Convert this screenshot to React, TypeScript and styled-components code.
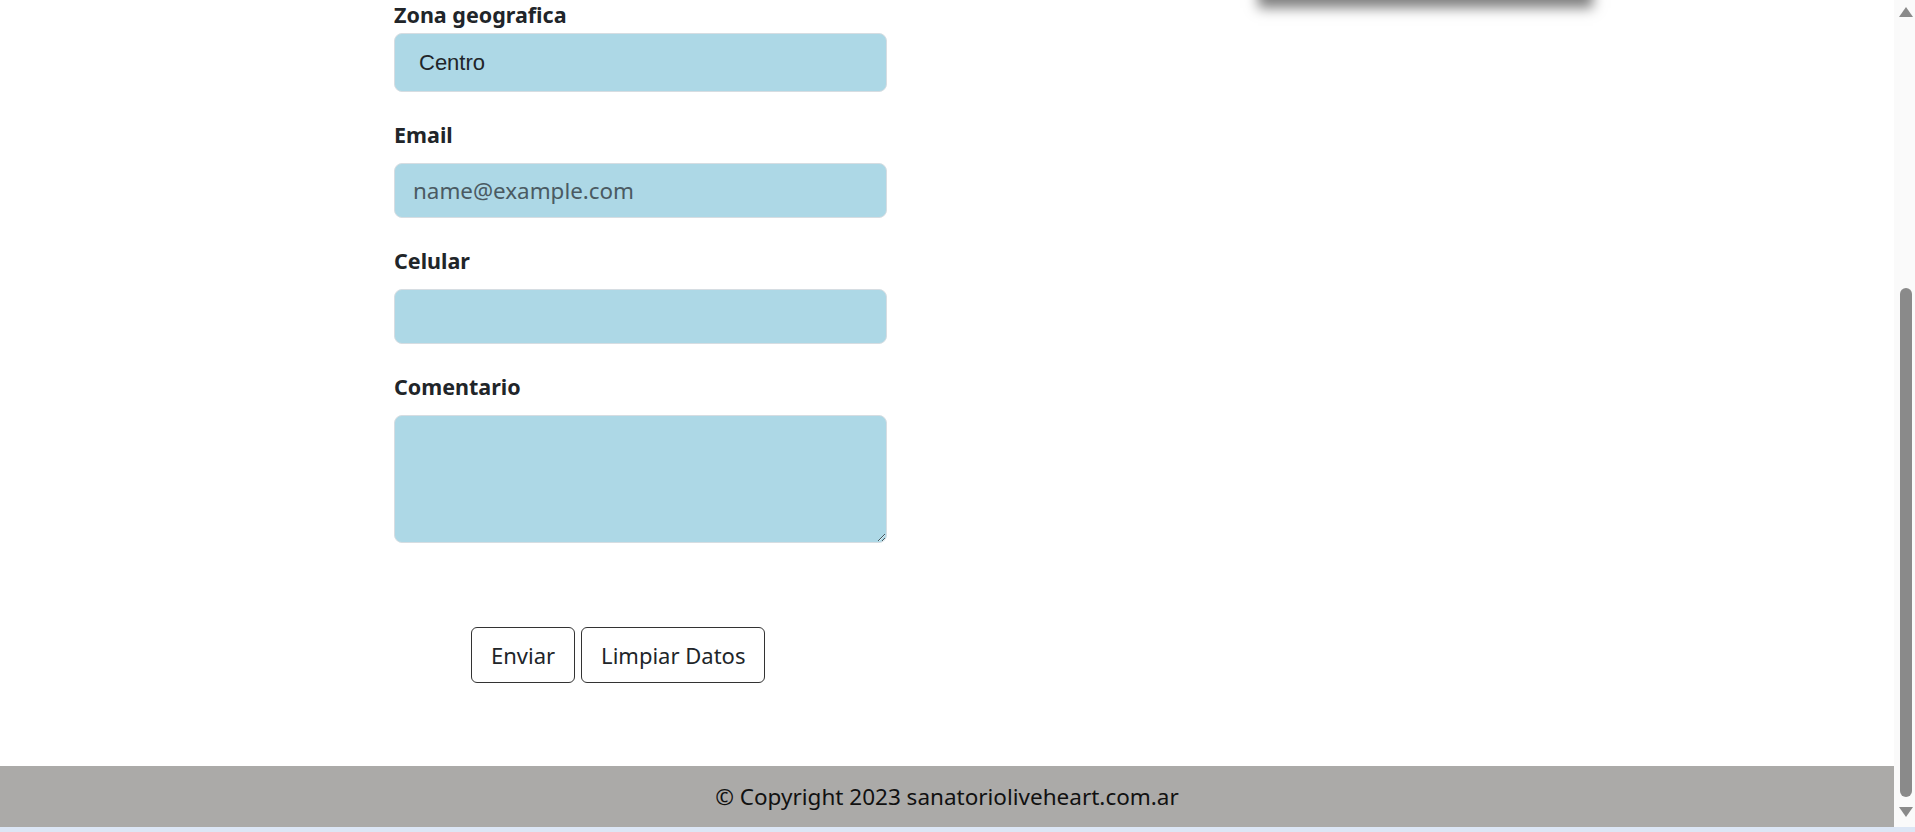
import React, { FC } from 'react'
import styled, { createGlobalStyle } from 'styled-components'

const GlobalStyle = createGlobalStyle`
  html, body {
    margin: 0;
    padding: 0;
    overflow: hidden;
    background-color: white;
  }

  * {
    box-sizing: border-box;
  }
`

const Screen = styled.div`
  display: flex;
  flex-direction: column;
  height: 832px;
  overflow: hidden;

  font-family: 'Noto Sans', 'Open Sans', sans-serif;
  color: #212529;
`

const Viewport = styled.div`
  display: flex;
  flex: 1;
  min-height: 0;
`

const Page = styled.div`
  display: flex;
  flex-direction: column;
  flex: 1;
  min-width: 0;
`

const Main = styled.main`
  display: grid;
  grid-template-columns: 493px 1fr;
  align-items: start;
  flex: 1;

  padding-left: 394px;
`

const Form = styled.form`
  display: flex;
  flex-direction: column;
`

const Label = styled.label<{ $gapTop: number; $gapBottom: number }>`
  display: block;
  margin-top: ${(p) => p.$gapTop}px;
  margin-bottom: ${(p) => p.$gapBottom}px;

  font-size: 21.5px;
  font-weight: 700;
  line-height: 30px;
`

const fieldBase = `
  display: block;
  width: 100%;

  border: 1px solid #d6dde2;
  border-radius: 8px;
  outline: none;

  background-color: #add8e6;
  color: #212529;
`

const Select = styled.select`
  ${fieldBase}
  height: 59px;
  padding: 0 24px;

  appearance: none;
  font-family: 'Liberation Sans', Arial, sans-serif;
  font-size: 22px;
`

const Input = styled.input`
  ${fieldBase}
  height: 55px;
  padding: 0 18px;

  font-family: 'Noto Sans', 'Open Sans', sans-serif;
  font-size: 22.4px;

  &::placeholder {
    color: #4a5a62;
  }
`

const TextArea = styled.textarea`
  ${fieldBase}
  height: 128px;
  padding: 10px 18px;

  font-family: 'Noto Sans', 'Open Sans', sans-serif;
  font-size: 22px;
`

const Buttons = styled.div`
  display: flex;
  gap: 6px;

  margin-top: 84px;
  padding-left: 77px;
`

const Button = styled.button`
  height: 56px;
  padding: 0 19px;

  border: 1px solid #333;
  border-radius: 6px;

  background-color: white;
  color: #212529;
  font-family: 'Noto Sans', 'Open Sans', sans-serif;
  font-size: 22px;
  cursor: pointer;
`

const Aside = styled.aside`
  display: flex;
`

const Card = styled.div`
  width: 335px;
  height: 120px;
  margin-top: -122px;
  margin-left: 371px;

  background-color: white;
  box-shadow: 0 10px 12px rgba(0, 0, 0, 0.5);
`

const Footer = styled.footer`
  display: flex;
  align-items: center;
  justify-content: center;
  height: 61px;

  background-color: #abaaa8;
  color: #111;
  font-size: 22.5px;
`

const Scrollbar = styled.div`
  display: flex;
  flex-direction: column;
  align-items: center;
  width: 21px;
  padding: 7px 0 10px 2px;

  background-color: #fafafa;
`

const Thumb = styled.div`
  width: 12px;
  flex: 1;
  margin: 271px 0 10px;

  border-radius: 6px;
  background-color: #8a8a8a;
`

const Strip = styled.div`
  height: 5px;
  background-color: #dce6f5;
`

const Arrow: FC<{ down?: boolean }> = ({ down }) => (
  <svg width="14" height="10" viewBox="0 0 14 10">
    <path d={down ? 'M0 0 H14 L7 10 Z' : 'M7 0 L14 10 H0 Z'} fill="#8a8a8a" />
  </svg>
)

export default function App() {
  return (
    <>
      <GlobalStyle />
      <Screen>
        <Viewport>
          <Page>
            <Main>
              <Form onSubmit={(e) => e.preventDefault()}>
                <Label htmlFor="zona" $gapTop={0} $gapBottom={3}>
                  Zona geografica
                </Label>
                <Select id="zona" defaultValue="Centro">
                  <option>Centro</option>
                  <option>Norte</option>
                  <option>Sur</option>
                </Select>

                <Label htmlFor="email" $gapTop={28} $gapBottom={13}>
                  Email
                </Label>
                <Input id="email" type="email" placeholder="name@example.com" />

                <Label htmlFor="celular" $gapTop={28} $gapBottom={13}>
                  Celular
                </Label>
                <Input id="celular" type="tel" />

                <Label htmlFor="comentario" $gapTop={28} $gapBottom={13}>
                  Comentario
                </Label>
                <TextArea id="comentario" />

                <Buttons>
                  <Button type="submit">Enviar</Button>
                  <Button type="reset">Limpiar Datos</Button>
                </Buttons>
              </Form>
              <Aside>
                <Card />
              </Aside>
            </Main>
            <Footer>© Copyright 2023 sanatorioliveheart.com.ar</Footer>
          </Page>
          <Scrollbar>
            <Arrow />
            <Thumb />
            <Arrow down />
          </Scrollbar>
        </Viewport>
        <Strip />
      </Screen>
    </>
  )
}
